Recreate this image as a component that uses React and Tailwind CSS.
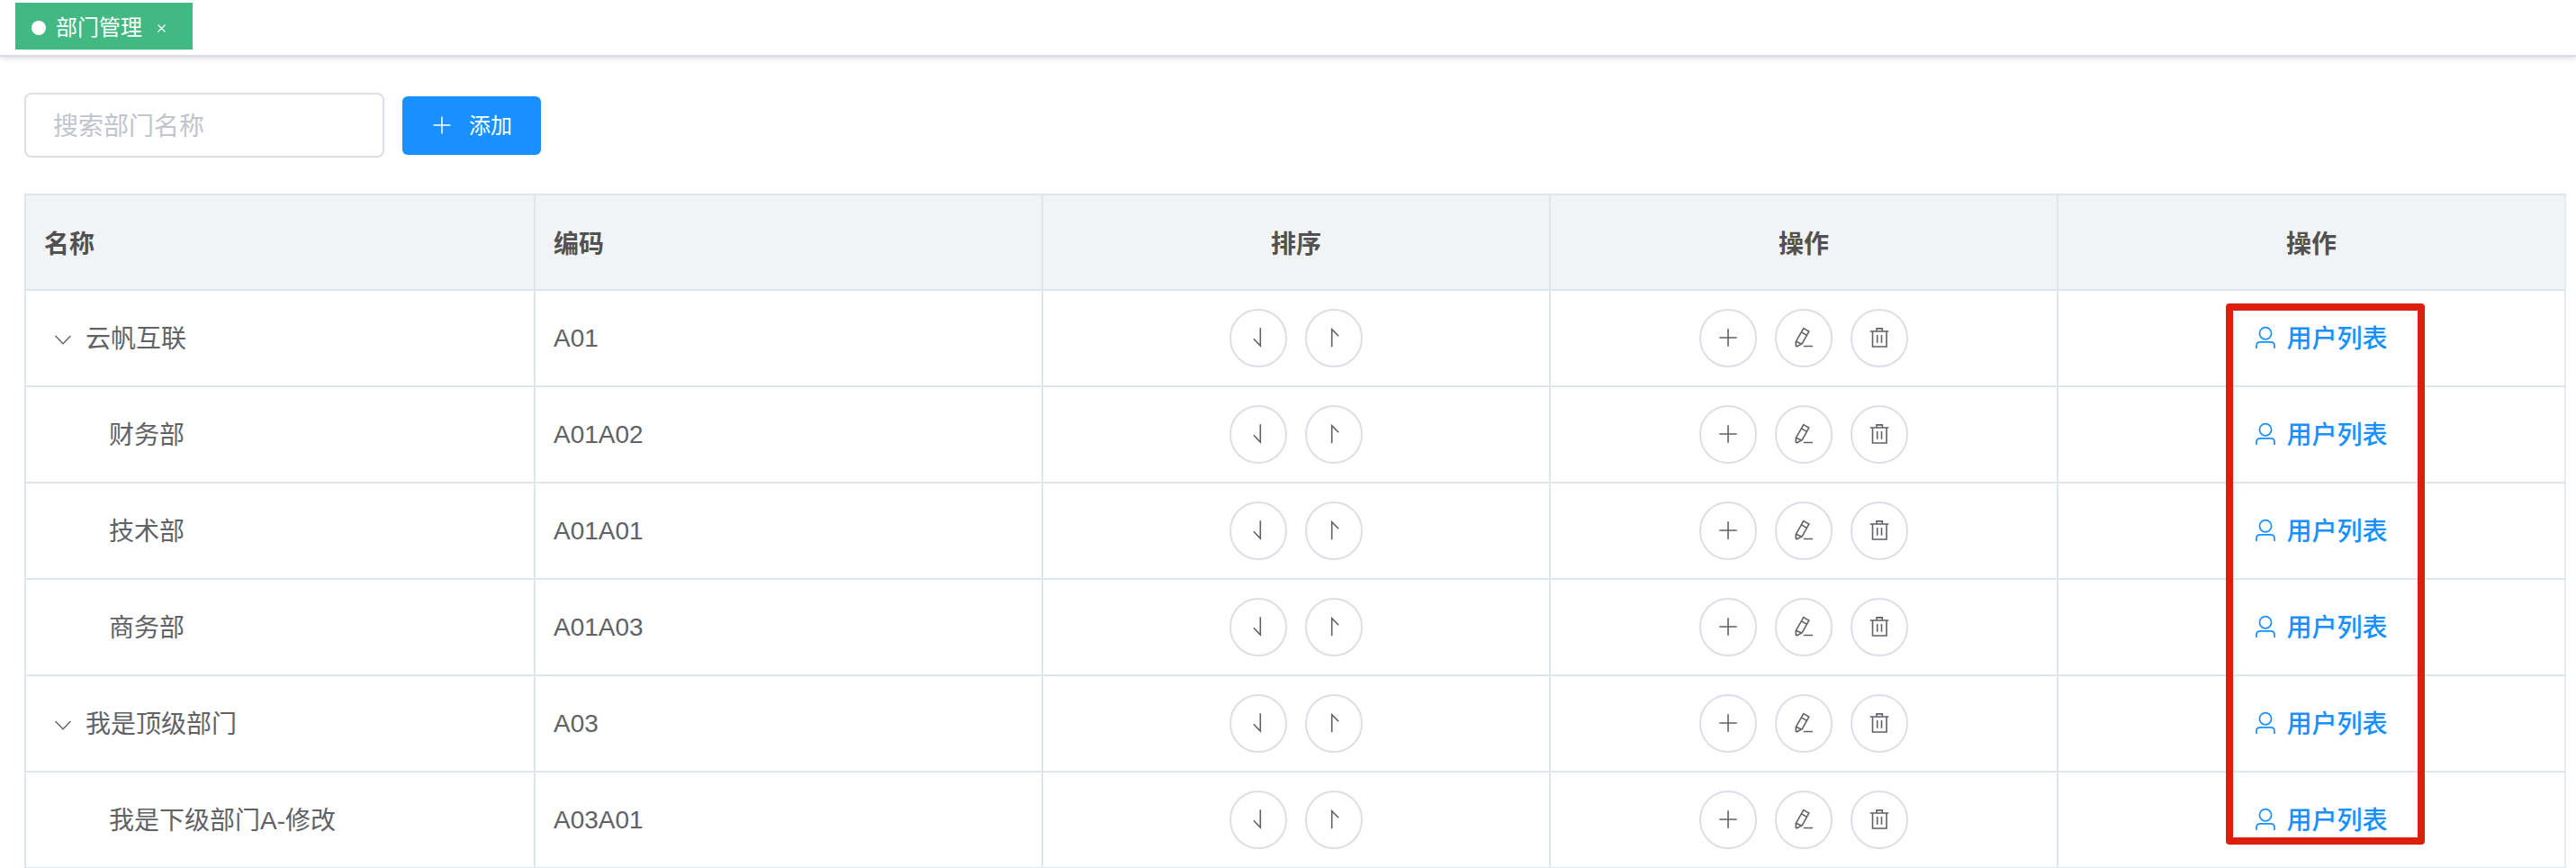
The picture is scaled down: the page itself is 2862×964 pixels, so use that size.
const departments = [
	{ code: 'A01', name: '云帆互联', parent: true },
	{ code: 'A01A02', name: '财务部' },
	{ code: 'A01A01', name: '技术部' },
	{ code: 'A01A03', name: '商务部' },
	{ code: 'A03', name: '我是顶级部门', parent: true },
	{ code: 'A03A01', name: '我是下级部门A-修改' },
]

const iconPaths = {
	down: 'M18.3 5.2V25L10.8 17.2',
	up: 'M13.7 26.2V6.6L21.2 14.2',
	plus: 'M16 6.3V25.7M6.3 16H25.7',
	edit: 'M15.8 5.6L21.8 9.1L14.2 22.6L8.3 25.8L7.3 25L7.3 20.4L15.8 5.6ZM13.5 9.9L19.5 13.4M7.5 20.2L13.6 23M15.8 25.5H26',
	trash: 'M5.7 9H26.3M8.5 9V26H24V9M13 9V5.9H19.3V9M13.7 13V21.7M18.5 13V21.7',
}

const Icon = ({ name }) => (
	<svg className="mb-px size-8" viewBox="0 0 32 32" fill="none" stroke="currentColor" strokeWidth="1.6">
		<path d={iconPaths[name]} />
	</svg>
)

const CircleButton = ({ icon }) => (
	<button className="flex h-[65px] w-16 items-center justify-center rounded-full border-2 border-[#dcdfe6] bg-white text-[#606266]">
		<Icon name={icon} />
	</button>
)

const Cell = ({ children, center }) => (
	<div className={`flex items-center border-r-2 border-b-2 border-[#dfe6ec] px-5 last:border-r-[#e6ebf5] ${center ? 'justify-center gap-5' : ''}`}>{children}</div>
)

const HeaderCell = ({ children, center }) => (
	<Cell center={center}>
		<span className="pt-[5px]">{children}</span>
	</Cell>
)

const DepartmentRow = ({ item }) => (
	<div className="grid h-[107px] grid-cols-[566px_repeat(4,564px)]">
		<Cell>
			{item.parent ? (
				<div className="flex items-center pl-3">
					<svg className="mt-1 mr-4 h-3 w-[18px]" viewBox="0 0 18 12" fill="none" stroke="currentColor" strokeWidth="1.4">
						<path d="M0.6 1L9 9.7L17.4 1" />
					</svg>
					<span className="pt-0.5">{item.name}</span>
				</div>
			) : (
				<span className="pt-0.5 pl-[72px]">{item.name}</span>
			)}
		</Cell>
		<Cell>{item.code}</Cell>
		<Cell center>
			<CircleButton icon="down" />
			<CircleButton icon="up" />
		</Cell>
		<Cell center>
			<CircleButton icon="plus" />
			<CircleButton icon="edit" />
			<CircleButton icon="trash" />
		</Cell>
		<Cell center>
			<a className="flex items-center gap-[11px] pl-[22px] font-medium text-[#1890ff]">
				<svg className="mb-px h-[26px] w-6" viewBox="0 0 24 26" fill="none" stroke="currentColor" strokeWidth="1.7">
					<circle cx="12" cy="8.3" r="6.6" />
					<path d="M2 25V22Q2 17.8 6.2 17.8H17.8Q22 17.8 22 22V25" />
				</svg>
				<span className="pt-0.5">用户列表</span>
			</a>
		</Cell>
	</div>
)

const App = () => (
	<div className="relative h-[964px] w-[2862px] overflow-hidden bg-white font-['Liberation_Sans','Noto_Sans_CJK_SC',sans-serif] text-[28px] text-[#606266]">
		<header className="flex h-[63px] items-start border-b-2 border-[#d8dce5] pt-[3px] pl-[17px] shadow-[0_2px_6px_rgba(0,0,0,0.12),0_0_6px_rgba(0,0,0,0.04)]">
			<div className="flex h-[52px] w-[197px] items-center bg-[#42b983] pl-[18px] text-2xl text-white">
				<span className="mt-1 size-4 rounded-full bg-white" />
				<span className="ml-[11px] pt-[3px]">部门管理</span>
				<svg className="mt-1 ml-[17px] size-[9px]" viewBox="0 0 9 9" stroke="currentColor" strokeWidth="1.1">
					<path d="M0.5 0.5L8.5 8.5M8.5 0.5L0.5 8.5" />
				</svg>
			</div>
		</header>

		<div className="flex items-center gap-5 pt-10 pl-[27px]">
			<input
				className="h-[72px] w-[400px] rounded-lg border-2 border-[#dcdfe6] px-[30px] pt-[3px] text-[28px] placeholder:text-[#c0c4cc]"
				placeholder="搜索部门名称"
			/>
			<button className="flex h-[65px] w-[154px] items-center rounded-md bg-[#1890ff] pl-[34px] text-2xl text-white">
				<svg className="mr-5 size-5" viewBox="0 0 20 20" stroke="currentColor" strokeWidth="1.5">
					<path d="M10 0.5V19.5M0.5 10H19.5" />
				</svg>
				<span className="pt-0.5">添加</span>
			</button>
		</div>

		<div className="mt-10 ml-[27px] w-[2824px] border-t-2 border-l-2 border-[#dfe6ec]">
			<div className="grid h-[106px] grid-cols-[566px_repeat(4,564px)] bg-[#f1f3f5] font-bold text-[#515151]">
				<HeaderCell>名称</HeaderCell>
				<HeaderCell>编码</HeaderCell>
				<HeaderCell center>排序</HeaderCell>
				<HeaderCell center>操作</HeaderCell>
				<HeaderCell center>操作</HeaderCell>
			</div>
			{departments.map((item) => (
				<DepartmentRow key={item.code} item={item} />
			))}
		</div>

		{/* highlight over the user list column */}
		<div className="absolute top-[337px] left-[2473px] h-[601px] w-[221px] rounded-[4px] border-8 border-[#db1f0c]" />
	</div>
)

export default App
